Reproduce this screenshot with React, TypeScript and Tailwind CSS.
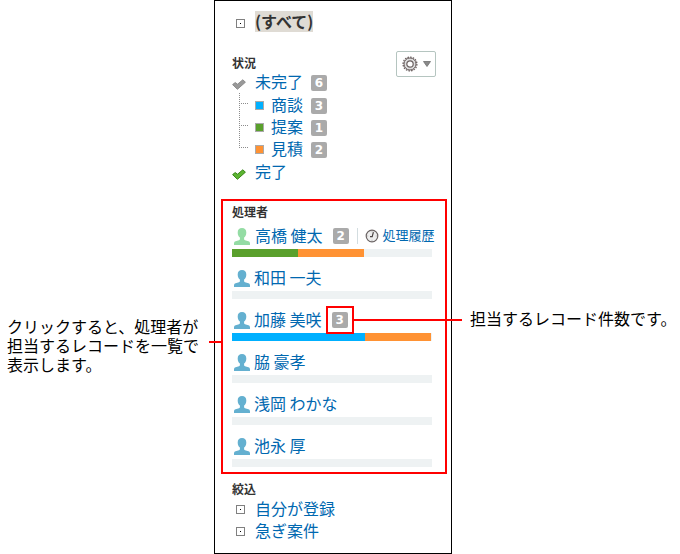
import React from 'react';

interface Segment {
    color: string;
    percent: number;
}

interface Person {
    name: string;
    count?: number;
    isMe?: boolean;
    marked?: boolean;
    segments: Segment[];
}

const statuses = [
    { label: '商談', count: 3, swatch: 'bg-[#00b0ff]' },
    { label: '提案', count: 1, swatch: 'bg-[#5aa02c]' },
    { label: '見積', count: 2, swatch: 'bg-[#ff9233]' },
];

const people: Person[] = [
    {
        name: '高橋 健太',
        count: 2,
        isMe: true,
        segments: [
            { color: 'bg-[#5aa02c]', percent: 33 },
            { color: 'bg-[#ff9233]', percent: 33 },
        ],
    },
    { name: '和田 一夫', segments: [] },
    {
        name: '加藤 美咲',
        count: 3,
        marked: true,
        segments: [
            { color: 'bg-[#00b0ff]', percent: 66.5 },
            { color: 'bg-[#ff9233]', percent: 33 },
        ],
    },
    { name: '脇 豪孝', segments: [] },
    { name: '浅岡 わかな', segments: [] },
    { name: '池永 厚', segments: [] },
];

const filters = ['自分が登録', '急ぎ案件'];

const DotBox = () => (
    <svg width="9" height="9" viewBox="0 0 9 9" className="shrink-0" shapeRendering="crispEdges">
        <rect x="0.5" y="0.5" width="8" height="8" fill="#fff" stroke="#808080" />
        <rect x="4" y="4" width="1" height="1" fill="#000" />
    </svg>
);

const CheckIcon = ({ fill, stroke }: { fill: string; stroke: string }) => (
    <svg width="14" height="11" viewBox="0 0 14 11" className="shrink-0">
        <path d="M0.6 5.6 3.2 3.6 5.6 5.2 10.8 0.8 13.4 3.2 5.4 10.3Z" fill={fill} stroke={stroke} strokeWidth="1" strokeLinejoin="round" />
    </svg>
);

const PersonIcon = ({ fill }: { fill: string }) => (
    <svg width="16" height="17" viewBox="0 0 16 17" className="shrink-0" fill={fill}>
        <path d="M8 0C5.2 0 3.7 1.8 3.7 4.4c0 2.3.8 4.1 2.2 5.1v1.7c0 .5-.3.8-.9 1L1.6 13.200C.5 13.600 0 14.300 0 15.400V17h16v-1.600c0-1.100-.5-1.800-1.600-2.200l-3.400-1c-.6-.2-.9-.5-.9-1V9.500c1.400-1 2.200-2.800 2.200-5.100C12.300 1.800 10.800 0 8 0Z" />
    </svg>
);

const ClockIcon = () => (
    <svg width="14" height="14" viewBox="0 0 14 14" className="shrink-0">
        <circle cx="7" cy="7" r="5.8" fill="#ededed" stroke="#6b6464" strokeWidth="1.2" />
        <path d="M7 2.2v1M7 10.8v1M2.2 7h1M10.8 7h1" stroke="#aaa" strokeWidth="0.8" />
        <path d="M8.4 3.2 7.2 7.6H5" fill="none" stroke="#4a4444" strokeWidth="1.2" />
    </svg>
);

const GearIcon = () => (
    <svg width="16" height="16" viewBox="0 0 16 16" className="shrink-0">
        <circle cx="8" cy="8" r="6.9" fill="none" stroke="#6b6060" strokeWidth="1.3" strokeDasharray="1.6 1.1" />
        <circle cx="8" cy="8" r="6" fill="#dedede" stroke="#6b6060" strokeWidth="1" />
        <circle cx="8" cy="8" r="3.2" fill="#fff" stroke="#6b6060" strokeWidth="1.2" />
    </svg>
);

// Dotted branches joining the parent status to its children
const TreeLines = () => (
    <svg width="10" height="55" viewBox="0 0 10 55" className="shrink-0" shapeRendering="crispEdges">
        <path d="M0.5 0V55M2 10.5H10M2 32.5H10M2 54.5H10" fill="none" stroke="#8c8c8c" strokeDasharray="1 1" />
    </svg>
);

const Badge = ({ count }: { count: number }) => (
    <span className="flex h-4 w-4 shrink-0 items-center justify-center rounded-[2px] bg-[#aaaaaa] font-['DejaVu_Sans'] text-[12px] leading-4 font-bold text-white">
        {count}
    </span>
);

const TextLink = ({ children }: { children: React.ReactNode }) => (
    <a href="#" className="block pb-0.5 whitespace-nowrap text-[#0068b0] hover:underline">
        {children}
    </a>
);

const PersonRow = ({ person }: { person: Person }) => (
    <li>
        <div className="flex h-[26px] items-center pl-0.5">
            <PersonIcon fill={person.isMe ? '#94dca4' : '#64b0d0'} />
            <span className={person.isMe ? 'ml-[5px]' : 'ml-1'}>
                <TextLink>{person.name}</TextLink>
            </span>
            {person.count && (
                <span className="relative ml-2.5">
                    <Badge count={person.count} />
                    {person.marked && (
                        <>
                            <span className="absolute -top-1.5 -left-1.5 h-7 w-7 border-2 border-[#ff0000]" />
                            <span className="absolute top-[7px] left-[22px] h-0.5 w-[108px] bg-[#ff0000]" />
                        </>
                    )}
                </span>
            )}
            {person.isMe && (
                <span className="ml-2 flex items-center gap-1 border-l border-[#d3dde0] pl-[7px] text-[13px] leading-[14px]">
                    <ClockIcon />
                    <TextLink>処理履歴</TextLink>
                </span>
            )}
        </div>
        <div className="flex h-2 w-[200px] bg-[#eef2f3]">
            {person.segments.map(segment => (
                <div key={segment.color} className={segment.color} style={{ width: `${segment.percent}%` }} />
            ))}
        </div>
    </li>
);

const App: React.FC = () => {
    return (
        <div className="grid grid-cols-[214px_238px_1fr] items-start bg-white font-['Noto_Sans_CJK_JP',sans-serif] text-[16px] leading-[22px] text-black">
            <p className="pt-[317px] pl-[7px] leading-[19px] whitespace-nowrap">
                クリックすると、処理者が
                <br />
                担当するレコードを一覧で
                <br />
                表示します。
            </p>

            <aside className="border border-black pt-2.5 pb-[11px]">
                <div className="flex items-center pl-[21px]">
                    <span className="pt-1">
                        <DotBox />
                    </span>
                    <a href="#" className="ml-2.5 h-[21px] bg-[#dfdbd4] leading-[21px] font-bold text-[#333333]">
                        (すべて)
                    </a>
                </div>

                {/* Status */}
                <section className="mt-[19px] flex items-start justify-between pr-[15px] pl-[17px]">
                    <div className="pt-[3px]">
                        <h2 className="h-[17px] text-[12px] leading-[17px] font-bold text-[#333333]">状況</h2>
                        <div className="flex h-[22px] items-center">
                            <span className="mr-[9px] pt-1">
                                <CheckIcon fill="#999999" stroke="#8c8c8c" />
                            </span>
                            <TextLink>未完了</TextLink>
                            <span className="ml-2 pt-0.5">
                                <Badge count={6} />
                            </span>
                        </div>
                        <div className="flex items-start pl-[7px]">
                            <TreeLines />
                            <ul className="ml-1.5 py-px">
                                {statuses.map(status => (
                                    <li key={status.label} className="flex h-[22px] items-center">
                                        <span className={`mr-[7px] h-[9px] w-[9px] border border-[#aaaaaa] ${status.swatch}`} />
                                        <TextLink>{status.label}</TextLink>
                                        <span className="ml-2 pt-0.5">
                                            <Badge count={status.count} />
                                        </span>
                                    </li>
                                ))}
                            </ul>
                        </div>
                        <div className="flex h-[22px] items-center">
                            <span className="mr-[9px] pt-1">
                                <CheckIcon fill="#5cb531" stroke="#3a861a" />
                            </span>
                            <TextLink>完了</TextLink>
                        </div>
                    </div>
                    <button
                        type="button"
                        aria-label="設定"
                        className="flex h-[26px] w-10 items-center justify-center gap-[5px] rounded-[2px] border border-[#b5c5c0] bg-white"
                    >
                        <GearIcon />
                        <svg width="8" height="6" viewBox="0 0 8 6">
                            <path d="M0.5 0.5h7L4 5.5Z" fill="#8a8a8a" stroke="#707070" strokeWidth="0.8" />
                        </svg>
                    </button>
                </section>

                {/* Assignees */}
                <section className="relative mt-4 mr-1 ml-1.5 border-2 border-[#ff0000] pb-[5px] pl-[9px]">
                    <span className="absolute top-[140px] -left-[14px] h-0.5 w-3 bg-[#ff0000]" />
                    <h2 className="text-[12px] leading-[22px] font-bold text-[#333333]">処理者</h2>
                    <ul className="flex flex-col gap-2">
                        {people.map(person => (
                            <PersonRow key={person.name} person={person} />
                        ))}
                    </ul>
                </section>

                {/* Saved filters */}
                <section className="mt-1.5 pl-[17px]">
                    <h2 className="text-[12px] leading-[18px] font-bold text-[#333333]">絞込</h2>
                    <ul>
                        {filters.map(filter => (
                            <li key={filter} className="flex h-[22px] items-center gap-2.5 pl-1">
                                <DotBox />
                                <TextLink>{filter}</TextLink>
                            </li>
                        ))}
                    </ul>
                </section>
            </aside>

            <p className="pt-[309px] pl-[18px] leading-[19px] whitespace-nowrap">担当するレコード件数です。</p>
        </div>
    );
};

export default App;
